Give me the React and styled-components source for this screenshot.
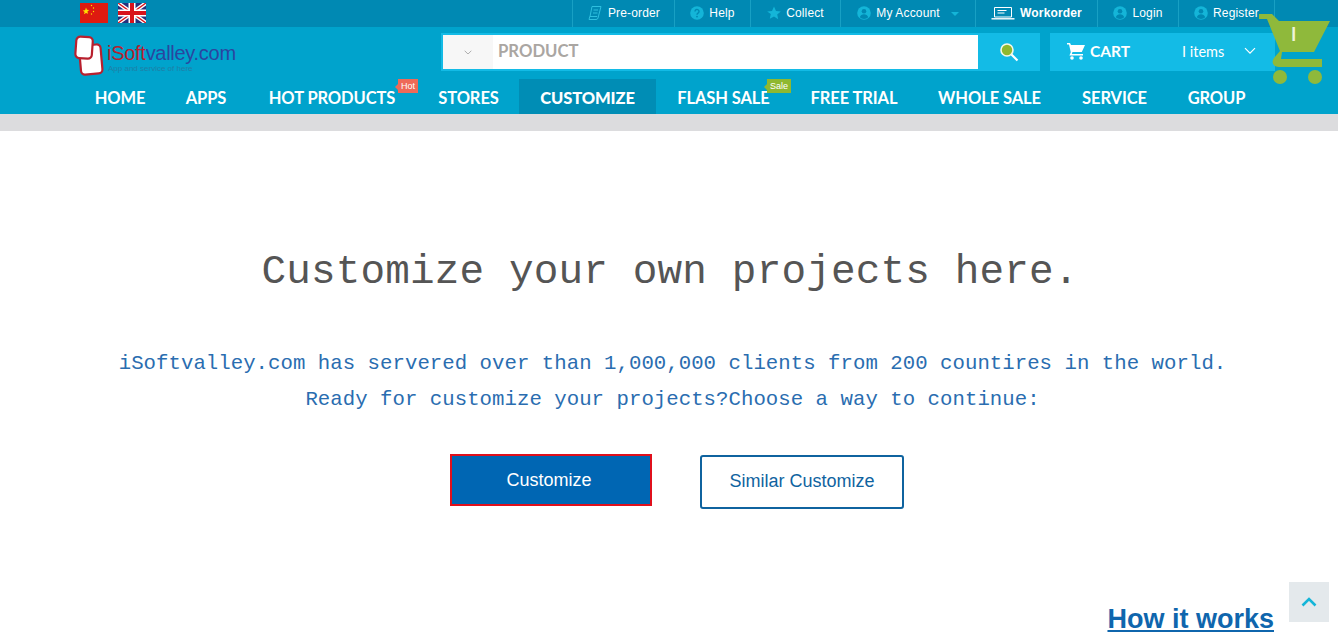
import React from "react";
import styled, { createGlobalStyle } from "styled-components";

const GlobalStyle = createGlobalStyle`
  html, body {
    margin: 0;
    padding: 0;
    height: 640px;
    overflow: hidden;
    background: #fff;
    font-family: "Liberation Sans", Arial, sans-serif;
  }
`;

const TOP_LINKS = [
  { label: "Pre-order", icon: "order", width: 102 },
  { label: "Help", icon: "help", width: 76 },
  { label: "Collect", icon: "star", width: 90 },
  { label: "My Account", icon: "user", width: 135, caret: true },
  { label: "Workorder", icon: "desk", width: 122, bold: true },
  { label: "Login", icon: "user", width: 81 },
  { label: "Register", icon: "user", width: 96 },
];

const NAV_LINKS = [
  { label: "HOME", width: 92 },
  { label: "APPS", width: 80 },
  { label: "HOT PRODUCTS", width: 172, badge: "Hot", tone: "#ee6a58" },
  { label: "STORES", width: 101 },
  { label: "CUSTOMIZE", width: 137, active: true },
  { label: "FLASH SALE", width: 135, badge: "Sale", tone: "#8fb82f" },
  { label: "FREE TRIAL", width: 126 },
  { label: "WHOLE SALE", width: 145 },
  { label: "SERVICE", width: 105 },
  { label: "GROUP", width: 99 },
];

const TopIcon = ({ name }) => {
  if (name === "order") {
    return (
      <svg width="16" height="16" viewBox="0 0 16 16" fill="none" stroke="#2fbfdf" strokeWidth="1">
        <path d="M5 1.500h9l-3 11.500a2 2 0 0 1-2 1.500H2l.8-3h7.400M5 1.500L3 11.500M6.500 5h4.500M6 8h4.500" />
      </svg>
    );
  }
  if (name === "help") {
    return (
      <svg width="14" height="14" viewBox="0 0 14 14">
        <circle cx="7" cy="7" r="6.800" fill="#14b5d8" />
        <path d="M5 5.400a2 2 0 1 1 3 1.800c-.7.4-1 .7-1 1.500" fill="none" stroke="#0089b3" strokeWidth="1.400" />
        <circle cx="7" cy="10.600" r=".9" fill="#0089b3" />
      </svg>
    );
  }
  if (name === "star") {
    return (
      <svg width="14" height="14" viewBox="0 0 14 14">
        <path d="M7 .5l2 4.400 4.800.5-3.600 3.200 1 4.700L7 10.400l-4.200 2.400 1-4.700L.2 5.400 5 4.900z" fill="#14b5d8" />
      </svg>
    );
  }
  if (name === "user") {
    return (
      <svg width="14" height="14" viewBox="0 0 14 14">
        <circle cx="7" cy="7" r="6.800" fill="#14b5d8" />
        <circle cx="7" cy="5.200" r="2.300" fill="#0089b3" />
        <path d="M2.800 11.200c.6-2 2.200-3 4.200-3s3.600 1 4.200 3A6 6 0 0 1 7 13a6 6 0 0 1-4.200-1.800z" fill="#0089b3" />
      </svg>
    );
  }
  return (
    <svg width="24" height="14" viewBox="0 0 24 14" fill="none" stroke="#fff">
      <path d="M3.500 1.500h17v9.500h-17zM6.500 4.500h9M6.500 7h7" />
      <path d="M.5 12.800h23" strokeWidth="1.400" />
    </svg>
  );
};

const ChinaFlag = () => (
  <svg width="28" height="20" viewBox="0 0 28 20">
    <rect width="28" height="20" fill="#de1a10" />
    <path d="M6 4.500l.9 2.300 2.400.1-1.900 1.500.7 2.400L6 9.900l-2.100 1.400.7-2.400-1.900-1.500 2.400-.1z" fill="#ffde00" />
    <g fill="#ffde00">
      <circle cx="11.500" cy="2.500" r=".7" />
      <circle cx="13.500" cy="5" r=".7" />
      <circle cx="13.500" cy="8.500" r=".7" />
      <circle cx="11.500" cy="11" r=".7" />
    </g>
  </svg>
);

const UkFlag = () => (
  <svg width="28" height="20" viewBox="0 0 28 20">
    <rect width="28" height="20" fill="#26307c" />
    <path d="M0 0l28 20M28 0L0 20" stroke="#fff" strokeWidth="4" />
    <path d="M0 0l28 20M28 0L0 20" stroke="#d8131b" strokeWidth="1.400" />
    <path d="M14 0v20M0 10h28" stroke="#fff" strokeWidth="7" />
    <path d="M14 0v20M0 10h28" stroke="#d8131b" strokeWidth="4" />
  </svg>
);

const LogoMark = () => (
  <svg width="32" height="42" viewBox="0 0 32 42">
    <rect x="6" y="10" width="21.500" height="29" rx="4" transform="rotate(-5 17 24)" fill="#fff" stroke="#b8202e" strokeWidth="2.200" />
    <rect x="1.800" y="1.800" width="16.500" height="21.500" rx="4" transform="rotate(4 9 13)" fill="#fff" stroke="#b8202e" strokeWidth="2.200" />
  </svg>
);

const SearchIcon = () => (
  <svg width="20" height="20" viewBox="0 0 20 20">
    <circle cx="8" cy="8" r="6" fill="#8fb82f" stroke="#f4f8e8" strokeWidth="1.600" />
    <path d="M12.500 12.500l6 6" stroke="#fff" strokeWidth="2.200" />
  </svg>
);

const CartSmall = () => (
  <svg width="18" height="18" viewBox="0 0 18 18" fill="#fff">
    <path d="M0 1h3l1 2h14l-3.200 7H5.500L4.800 12H16v1.600H2.400l1.400-3.400L2 2.600H0z" />
    <circle cx="5" cy="16" r="1.800" />
    <circle cx="14" cy="16" r="1.800" />
  </svg>
);

const Chevron = ({ size = 12, color = "#fff" }) => (
  <svg width={size} height={size * 0.6} viewBox="0 0 12 7" fill="none" stroke={color} strokeWidth="1.200">
    <path d="M1 1l5 5 5-5" />
  </svg>
);

const CartBig = () => (
  <svg width="71" height="71" viewBox="0 0 71 71" fill="#8fb93b">
    <path d="M0 0H13L20 7H71L55 38H23L22 45H63V53H20C14 53 12 48 15 44L21 37L8 5H0Z" />
    <circle cx="21" cy="63" r="7" />
    <circle cx="56" cy="63" r="7" />
  </svg>
);

const App = () => {
  return (
    <Page>
      <GlobalStyle />
      <TopBar>
        <Flags>
          <ChinaFlag />
          <UkFlag />
        </Flags>
        <TopLinks>
          {TOP_LINKS.map((link) => (
            <TopLink key={link.label} $width={link.width} $bold={link.bold}>
              <TopIcon name={link.icon} />
              {link.label}
              {link.caret && <Caret />}
            </TopLink>
          ))}
        </TopLinks>
      </TopBar>

      <Header>
        <MiddleRow>
          <Logo>
            <LogoMark />
            <LogoText>
              <LogoName>
                <em>iSoft</em>valley.com
              </LogoName>
              <LogoTag>App and service of here</LogoTag>
            </LogoText>
          </Logo>
          <SearchBox>
            <SearchSelect>
              <Chevron size={8} color="#9a9a9a" />
            </SearchSelect>
            <SearchInput>PRODUCT</SearchInput>
            <SearchButton>
              <SearchIcon />
            </SearchButton>
          </SearchBox>
          <CartBox>
            <CartSmall />
            <CartLabel>CART</CartLabel>
            <CartCount>I items</CartCount>
            <Chevron size={12} />
          </CartBox>
        </MiddleRow>
        <Nav>
          {NAV_LINKS.map((link) => (
            <NavLink key={link.label} $width={link.width} $active={link.active}>
              {link.label}
              {link.badge && <Badge $tone={link.tone}>{link.badge}</Badge>}
            </NavLink>
          ))}
        </Nav>
        <BigCart>
          <CartBig />
          <BigCartCount>I</BigCartCount>
        </BigCart>
      </Header>
      <GreyBand />

      <Main>
        <Title>Customize your own projects here.</Title>
        <Lead>iSoftvalley.com has servered over than 1,000,000 clients from 200 countires in the world.</Lead>
        <Lead>Ready for customize your projects?Choose a way to continue:</Lead>
        <Buttons>
          <PrimaryButton>Customize</PrimaryButton>
          <OutlineButton>Similar Customize</OutlineButton>
        </Buttons>
        <HowItWorks>How it works</HowItWorks>
      </Main>

      <BackToTop>
        <svg width="16" height="10" viewBox="0 0 16 10" fill="none" stroke="#14b5d8" strokeWidth="2.600">
          <path d="M1.500 8.500L8 2l6.500 6.500" />
        </svg>
      </BackToTop>
    </Page>
  );
};

const Page = styled.div`
  position: relative;
  width: 1338px;
  height: 640px;
  overflow: hidden;
`;

const TopBar = styled.div`
  display: flex;
  justify-content: space-between;
  height: 27px;
  padding: 0 63px 0 80px;
  background: #0089b3;
`;

const Flags = styled.div`
  display: flex;
  align-items: flex-start;
  gap: 10px;
  padding-top: 3px;
`;

const TopLinks = styled.div`
  display: flex;
  border-right: 1px solid #18a0c4;
`;

const TopLink = styled.div`
  display: flex;
  align-items: center;
  justify-content: center;
  gap: 5px;
  box-sizing: border-box;
  width: ${(p) => p.$width}px;
  padding-bottom: 2px;
  border-left: 1px solid #18a0c4;
  color: #fff;
  font-size: 12px;
  font-weight: ${(p) => (p.$bold ? 700 : 400)};
  letter-spacing: 0.15px;
`;

const Caret = styled.span`
  width: 0;
  height: 0;
  margin: 2px 0 0 6px;
  border-left: 4px solid transparent;
  border-right: 4px solid transparent;
  border-top: 4px solid #14b5d8;
`;

const Header = styled.header`
  position: relative;
  height: 87px;
  background: #00a3cc;
`;

const MiddleRow = styled.div`
  display: flex;
  height: 52px;
  padding-left: 74px;
`;

const Logo = styled.div`
  display: flex;
  align-items: flex-start;
  gap: 1px;
  width: 367px;
  padding-top: 8px;
  box-sizing: border-box;
`;

const LogoText = styled.div`
  padding-top: 8px;
`;

const LogoName = styled.div`
  color: #2a46a0;
  font-size: 20px;
  line-height: 20px;
  letter-spacing: -0.280px;

  em {
    color: #b8202e;
    font-style: normal;
  }
`;

const LogoTag = styled.div`
  margin-top: 2px;
  padding-left: 1px;
  color: #1f7fa6;
  font-size: 8px;
  line-height: 8px;
`;

const SearchBox = styled.div`
  display: flex;
  align-self: flex-start;
  box-sizing: border-box;
  width: 599px;
  height: 38px;
  margin-top: 6px;
  background: #13bbe6;
  padding: 2px 0 2px 2px;
`;

const SearchSelect = styled.div`
  display: flex;
  align-items: center;
  justify-content: center;
  width: 50px;
  background: #f7f7f7;
`;

const SearchInput = styled.div`
  flex: 1;
  background: #fff;
  padding-left: 5px;
  color: #aaa6a2;
  font-family: Lato, sans-serif;
  font-size: 16.700px;
  font-weight: 700;
  line-height: 33px;
`;

const SearchButton = styled.div`
  display: flex;
  align-items: center;
  justify-content: center;
  width: 62px;
`;

const CartBox = styled.div`
  display: flex;
  align-self: flex-start;
  align-items: center;
  box-sizing: border-box;
  width: 225px;
  height: 38px;
  margin: 6px 0 0 10px;
  padding: 0 0 2px 17px;
  background: #13bbe6;
  color: #fff;
  font-family: Lato, sans-serif;
`;

const CartLabel = styled.span`
  width: 97px;
  padding-left: 5px;
  font-size: 15.500px;
  font-weight: 700;
  box-sizing: border-box;
`;

const CartCount = styled.span`
  width: 62px;
  font-size: 14.500px;
`;

const Nav = styled.nav`
  display: flex;
  height: 35px;
  padding-left: 74px;
`;

const NavLink = styled.div`
  position: relative;
  width: ${(p) => p.$width}px;
  background: ${(p) => (p.$active ? "#008db5" : "transparent")};
  color: #fff;
  font-family: Lato, sans-serif;
  font-size: 16.500px;
  font-weight: ${(p) => (p.$active ? 900 : 700)};
  letter-spacing: -0.100px;
  line-height: 38px;
  text-align: center;
`;

const Badge = styled.span`
  position: absolute;
  top: 0;
  right: 0;
  padding: 0 3px;
  background: ${(p) => p.$tone};
  color: #fff;
  font-family: "Liberation Sans", Arial, sans-serif;
  font-size: 9px;
  font-weight: 400;
  letter-spacing: 0;
  line-height: 14px;

  &::before {
    content: "";
    position: absolute;
    left: -3px;
    top: 5px;
    border-top: 3px solid transparent;
    border-bottom: 3px solid transparent;
    border-right: 3px solid ${(p) => p.$tone};
  }
`;

const BigCart = styled.div`
  position: absolute;
  top: -13px;
  left: 1259px;
  width: 71px;
  height: 71px;
`;

const BigCartCount = styled.span`
  position: absolute;
  top: 9px;
  left: 32px;
  color: #eef4d8;
  font-family: Lato, sans-serif;
  font-size: 18px;
  font-weight: 700;
`;

const GreyBand = styled.div`
  height: 17px;
  background: #dcdcde;
`;

const Main = styled.main`
  display: flex;
  flex-direction: column;
  align-items: center;
  padding-top: 112px;
`;

const Title = styled.h1`
  margin: 0 0 45px 2px;
  color: #555;
  font-family: "Liberation Mono", monospace;
  font-size: 41px;
  font-weight: 400;
  line-height: 58px;
  letter-spacing: 0.150px;
`;

const Lead = styled.p`
  margin: 0 0 0 7px;
  color: #2a6db0;
  font-family: "Liberation Mono", monospace;
  font-size: 20.700px;
  letter-spacing: 0.030px;
  line-height: 36px;
`;

const Buttons = styled.div`
  display: flex;
  align-items: flex-start;
  gap: 48px;
  margin: 36px 0 0 16px;
`;

const PrimaryButton = styled.div`
  box-sizing: border-box;
  width: 202px;
  height: 52px;
  padding-right: 4px;
  border: 2px solid #e0101c;
  background: #0066b3;
  color: #fff;
  font-size: 18px;
  line-height: 49px;
  text-align: center;
`;

const OutlineButton = styled.div`
  box-sizing: border-box;
  width: 204px;
  height: 54px;
  margin-top: 1px;
  border: 2px solid #0f639f;
  border-radius: 3px;
  color: #0f639f;
  font-size: 18px;
  line-height: 49px;
  text-align: center;
`;

const HowItWorks = styled.a`
  align-self: flex-end;
  margin: 94px 64px 0 0;
  color: #0f66ad;
  font-size: 27px;
  font-weight: 700;
  line-height: 32px;
  text-decoration: underline;
`;

const BackToTop = styled.div`
  position: absolute;
  top: 582px;
  left: 1289px;
  display: flex;
  align-items: center;
  justify-content: center;
  width: 40px;
  height: 40px;
  background: #e4e9ec;
`;

export default App;
